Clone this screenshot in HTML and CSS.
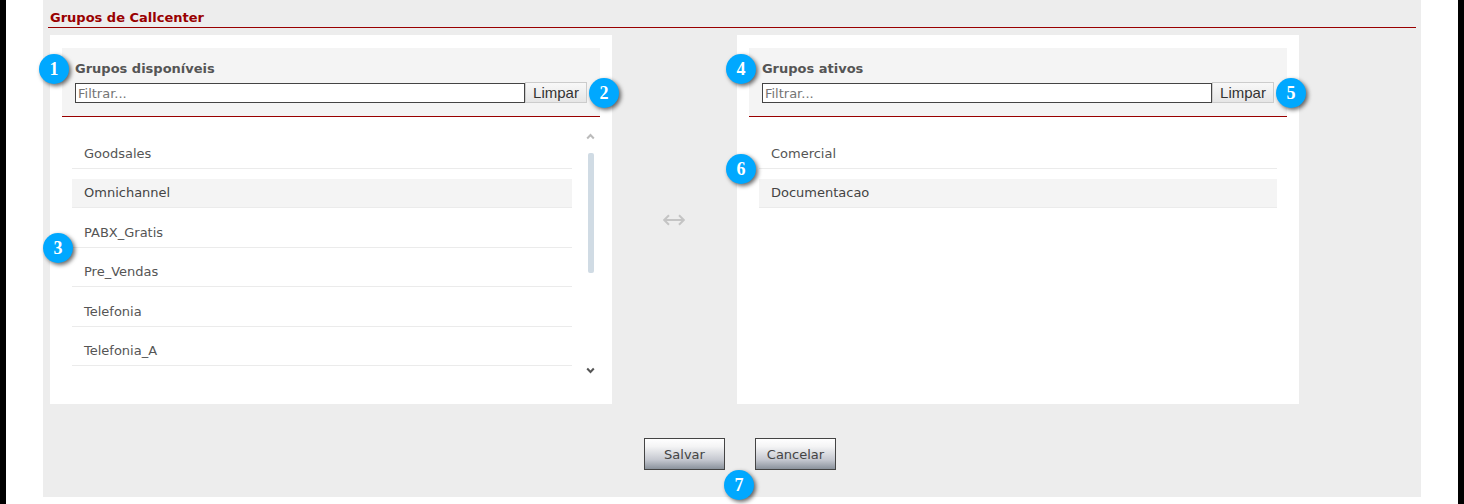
FILE: index.html
```html
<!DOCTYPE html>
<html lang="pt-BR">
<head>
    <meta charset="UTF-8">
    <title>Grupos de Callcenter</title>
    <link rel="stylesheet" href="styles.css">
</head>
<body>

<main class="container">
    <h1 class="page-title">Grupos de Callcenter</h1>
    <form>
        <div class="columns">
            <section class="panel">
                <div class="panel-header">
                    <label for="filtroDisponiveis">Grupos disponíveis</label>
                    <div class="filter">
                        <input type="text" id="filtroDisponiveis" placeholder="Filtrar...">
                        <button type="button" class="clear-btn">Limpar</button>
                    </div>
                    <span class="marker marker-title">1</span>
                    <span class="marker marker-clear">2</span>
                </div>
                <div class="list-area scrollable">
                    <ul class="group-list">
                        <li>Goodsales</li>
                        <li class="selected">Omnichannel</li>
                        <li>PABX_Gratis</li>
                        <li>Pre_Vendas</li>
                        <li>Telefonia</li>
                        <li>Telefonia_A</li>
                    </ul>
                    <div class="scrollbar">
                        <svg class="up" width="9" height="7" viewBox="0 0 9 7"><path d="M1.2 5.5L4.5 2l3.3 3.5"/></svg>
                        <div class="track"><div class="thumb"></div></div>
                        <svg class="down" width="9" height="7" viewBox="0 0 9 7"><path d="M1.2 1.5L4.5 5l3.3-3.5"/></svg>
                    </div>
                </div>
                <span class="marker marker-available">3</span>
            </section>

            <div class="swap">
                <svg width="22" height="12" viewBox="0 0 22 12"><path d="M1.5 6h19M6 1.2L1.2 6 6 10.8M16 1.2L20.8 6 16 10.8"/></svg>
            </div>

            <section class="panel">
                <div class="panel-header">
                    <label for="filtroAtivos">Grupos ativos</label>
                    <div class="filter">
                        <input type="text" id="filtroAtivos" placeholder="Filtrar...">
                        <button type="button" class="clear-btn">Limpar</button>
                    </div>
                    <span class="marker marker-title">4</span>
                    <span class="marker marker-clear">5</span>
                </div>
                <div class="list-area">
                    <ul class="group-list">
                        <li>Comercial</li>
                        <li class="selected">Documentacao</li>
                    </ul>
                </div>
                <span class="marker marker-active">6</span>
            </section>
        </div>

        <div class="actions">
            <button type="submit" class="action-btn">Salvar</button>
            <button type="button" class="action-btn">Cancelar</button>
            <span class="marker marker-actions">7</span>
        </div>
    </form>
</main>

</body>
</html>
```

FILE: styles.css
```css
* {
    box-sizing: border-box;
}
body {
    margin: 0;
    min-height: 100vh;
    padding: 0 37px 7px;
    border: solid #000;
    border-width: 0 6px;
    background-color: #fff;
    color: #555;
    font-family: Verdana, "DejaVu Sans", sans-serif;
    font-size: 13px;
}
.container {
    padding: 8px 5px 27px;
    background-color: #ededed;
}
.page-title {
    margin: 0 0 7px;
    padding: 0 2px;
    border-bottom: 1px solid #900;
    color: #900;
    font-size: 13px;
    line-height: 19px;
}
.columns {
    display: grid;
    grid-template-columns: 9fr 2fr 9fr;
    margin: 0 117px 0 2px;
}
.panel {
    position: relative;
    min-height: 369px;
    padding: 13px 12px 0;
    background-color: #fff;
}
.panel-header {
    position: relative;
    height: 69px;
    padding: 12px 13px 0;
    border-bottom: 1px solid #900;
    background-color: #f4f4f4;
}
.panel-header label {
    display: block;
    font-weight: bold;
    line-height: 18px;
}
.filter {
    display: flex;
    align-items: flex-end;
    margin-top: 4px;
}
.filter input {
    flex: 1;
    min-width: 0;
    height: 20px;
    padding: 1px 2px;
    border: 1px solid #444;
    border-radius: 0;
    background-color: #fff;
    font: inherit;
}
.filter input::placeholder {
    color: #757575;
}
.clear-btn {
    width: 62px;
    height: 21px;
    padding: 0;
    border: 1px solid #ccc;
    background: linear-gradient(#f8f8f8, #e6e6e6);
    color: #333;
    font-family: Arial, "Liberation Sans", sans-serif;
    font-size: 15px;
    line-height: 17px;
}
.list-area {
    display: flex;
    padding: 0 10px;
    margin-top: 12px;
}
.scrollable {
    padding-right: 5px;
}
.group-list {
    display: grid;
    flex: 1;
    grid-template-rows: repeat(6, 1fr);
    height: 237px;
    margin: 0;
    padding: 0;
    list-style: none;
}
.group-list li {
    align-self: end;
    height: 29px;
    padding-left: 12px;
    border-bottom: 1px solid #ebebeb;
    line-height: 28px;
}
.group-list .selected {
    background-color: #f4f4f4;
    color: #444;
}
.scrollbar {
    display: flex;
    flex-direction: column;
    align-items: center;
    width: 9px;
    height: 247px;
    margin-left: 14px;
    padding: 4px 0 2px;
}
.scrollbar svg {
    fill: none;
    stroke-width: 2;
}
.up {
    stroke: #bbb;
}
.down {
    stroke: #555;
}
.track {
    flex: 1;
    padding-top: 13px;
}
.thumb {
    width: 6px;
    height: 120px;
    border-radius: 2px;
    background-color: #d0dbe4;
}
.swap {
    display: flex;
    align-items: center;
    justify-content: center;
}
.swap svg {
    fill: none;
    stroke: #c4c4c4;
    stroke-width: 2;
}
.actions {
    position: relative;
    display: flex;
    justify-content: center;
    gap: 30px;
    margin-top: 34px;
    padding-left: 16px;
}
.action-btn {
    width: 81px;
    height: 32px;
    padding: 0;
    border: 1px solid #444;
    background: linear-gradient(#fff 0%, #f4f4f5 25%, #c4c7cf 70%, #8a929c 100%);
    color: #444;
    font: inherit;
}
.clear-btn,
.action-btn {
    cursor: pointer;
}

/* numbered help markers */
.marker {
    position: absolute;
    width: 30px;
    height: 30px;
    border-radius: 50%;
    background-color: #00a8ff;
    box-shadow: 2px 2px 4px rgba(0, 0, 0, 0.6);
    color: #fff;
    font: bold 18px/31px "Liberation Serif", serif;
    text-align: center;
}
.marker-title {
    top: 6px;
    left: -23px;
}
.marker-clear {
    top: 30px;
    right: -19px;
}
.marker-available {
    top: 198px;
    left: -7px;
}
.marker-active {
    top: 119px;
    left: -11px;
}
.marker-actions {
    top: 32px;
    left: calc(50% - 8px);
}
```
